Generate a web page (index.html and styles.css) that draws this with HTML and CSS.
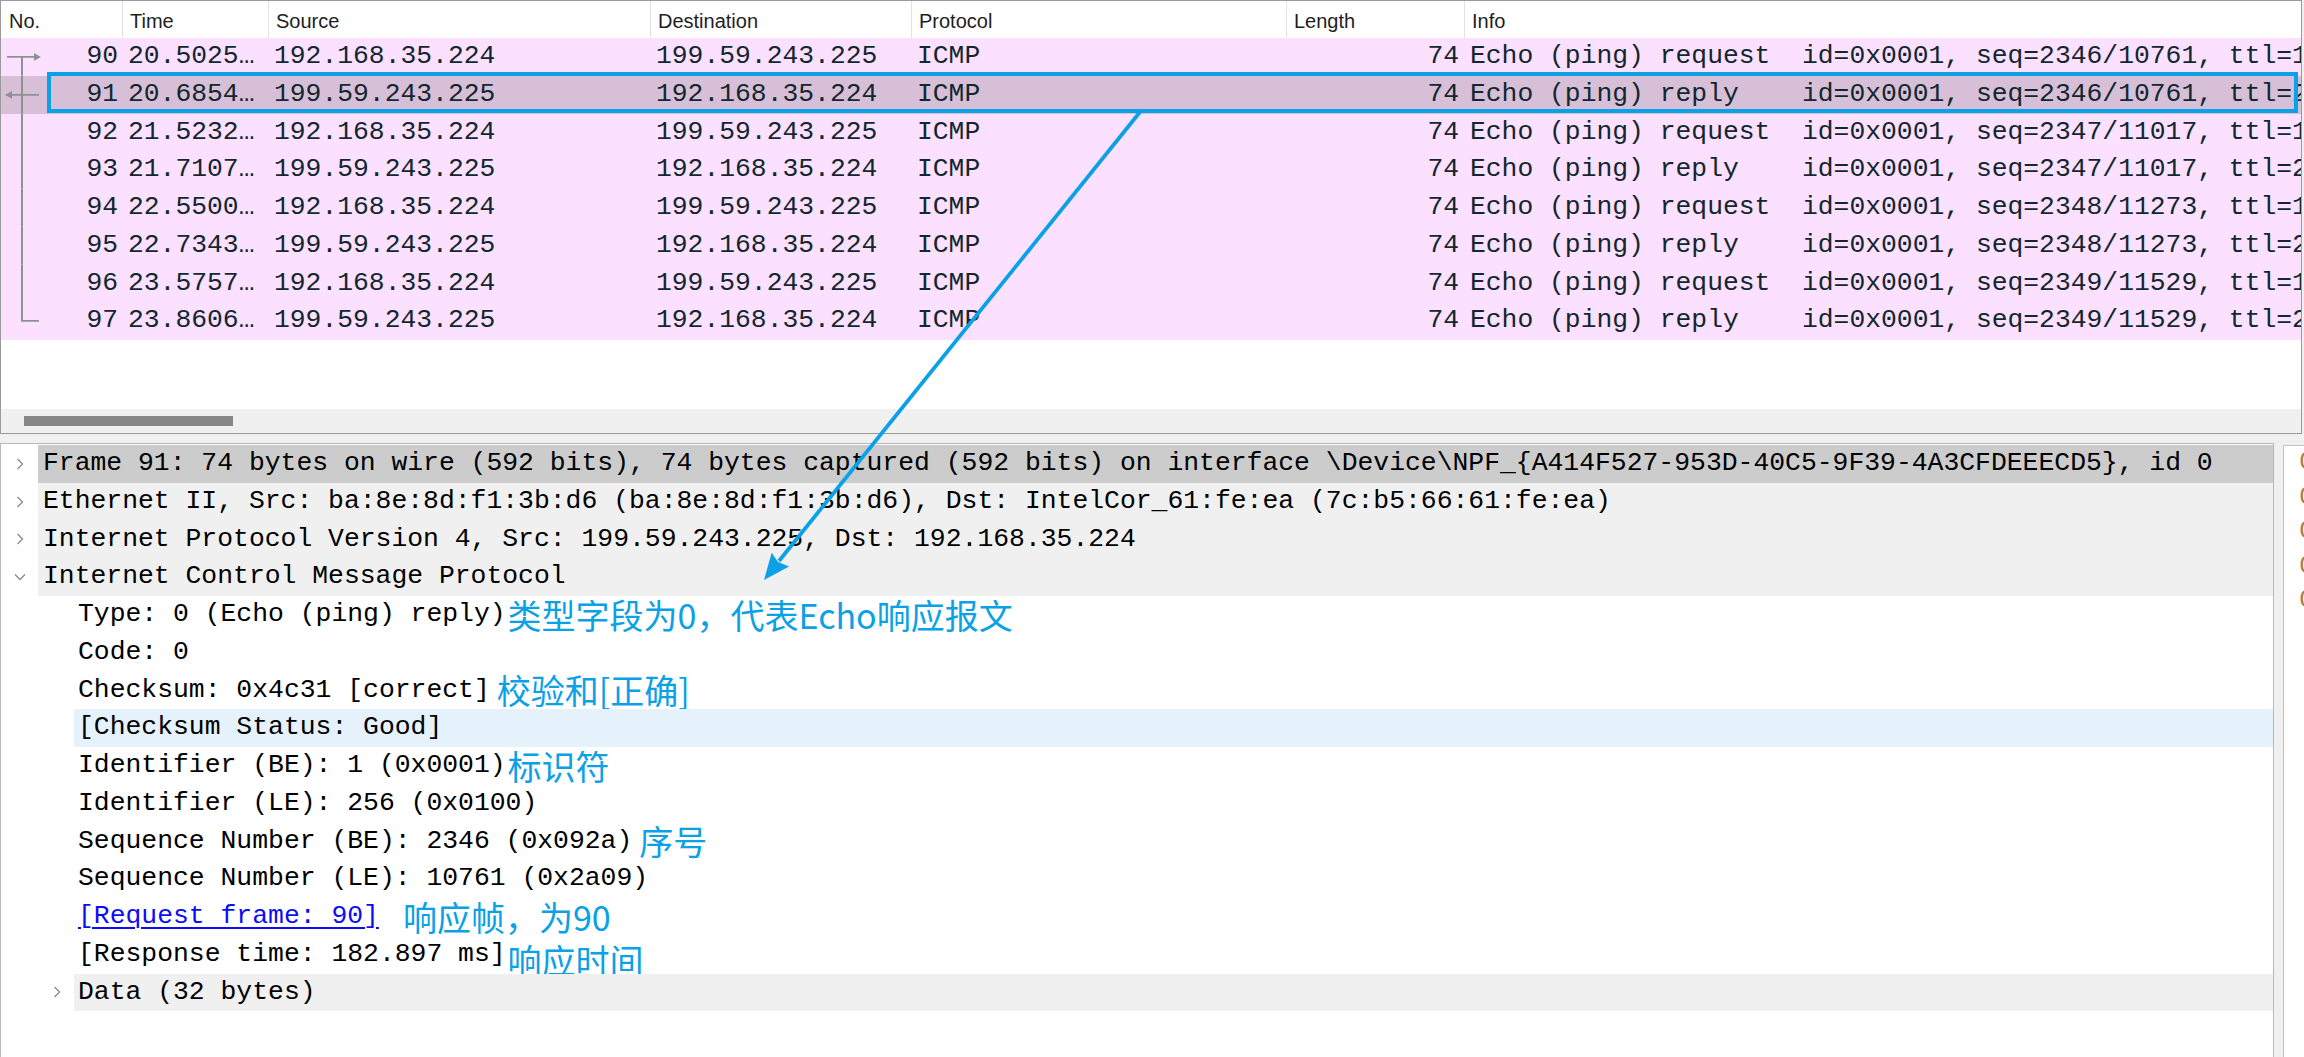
FILE: index.html
```html
<!DOCTYPE html>
<html lang="zh">
<head>
<meta charset="utf-8">
<title>Wireshark · ICMP Echo reply</title>
<link rel="stylesheet" href="styles.css">
</head>
<body>
<div class="app">
  <section class="plist">
    <div class="plist-head cols">
      <div class="hc">No.</div>
      <div class="hc">Time</div>
      <div class="hc">Source</div>
      <div class="hc">Destination</div>
      <div class="hc">Protocol</div>
      <div class="hc">Length</div>
      <div class="hc">Info</div>
    </div>
    <div class="plist-body">
      <div class="prow cols">
        <div class="no"><svg viewBox="0 0 40 38" preserveAspectRatio="none"><path class="rl" d="M6 19H34M21 19V38"/><polygon class="rh" points="33,15 40,19 33,23"/></svg><span>90</span></div>
        <div>20.5025…</div><div>192.168.35.224</div><div>199.59.243.225</div><div>ICMP</div><div class="len">74</div><div>Echo (ping) request  id=0x0001, seq=2346/10761, ttl=128 (reply in 91)</div>
      </div>
      <div class="prow cols cur">
        <div class="no"><svg viewBox="0 0 40 38" preserveAspectRatio="none"><path class="rl" d="M11 19H38M21 0V38"/><polygon class="rh" points="11,15 4,19 11,23"/></svg><span>91</span></div>
        <div>20.6854…</div><div>199.59.243.225</div><div>192.168.35.224</div><div>ICMP</div><div class="len">74</div><div>Echo (ping) reply    id=0x0001, seq=2346/10761, ttl=241 (request in 90)</div>
      </div>
      <div class="prow cols">
        <div class="no"><svg viewBox="0 0 40 38" preserveAspectRatio="none"><path class="rl" d="M21 0V38"/></svg><span>92</span></div>
        <div>21.5232…</div><div>192.168.35.224</div><div>199.59.243.225</div><div>ICMP</div><div class="len">74</div><div>Echo (ping) request  id=0x0001, seq=2347/11017, ttl=128 (reply in 93)</div>
      </div>
      <div class="prow cols">
        <div class="no"><svg viewBox="0 0 40 38" preserveAspectRatio="none"><path class="rl" d="M21 0V38"/></svg><span>93</span></div>
        <div>21.7107…</div><div>199.59.243.225</div><div>192.168.35.224</div><div>ICMP</div><div class="len">74</div><div>Echo (ping) reply    id=0x0001, seq=2347/11017, ttl=241 (request in 92)</div>
      </div>
      <div class="prow cols">
        <div class="no"><svg viewBox="0 0 40 38" preserveAspectRatio="none"><path class="rl" d="M21 0V38"/></svg><span>94</span></div>
        <div>22.5500…</div><div>192.168.35.224</div><div>199.59.243.225</div><div>ICMP</div><div class="len">74</div><div>Echo (ping) request  id=0x0001, seq=2348/11273, ttl=128 (reply in 95)</div>
      </div>
      <div class="prow cols">
        <div class="no"><svg viewBox="0 0 40 38" preserveAspectRatio="none"><path class="rl" d="M21 0V38"/></svg><span>95</span></div>
        <div>22.7343…</div><div>199.59.243.225</div><div>192.168.35.224</div><div>ICMP</div><div class="len">74</div><div>Echo (ping) reply    id=0x0001, seq=2348/11273, ttl=241 (request in 94)</div>
      </div>
      <div class="prow cols">
        <div class="no"><svg viewBox="0 0 40 38" preserveAspectRatio="none"><path class="rl" d="M21 0V38"/></svg><span>96</span></div>
        <div>23.5757…</div><div>192.168.35.224</div><div>199.59.243.225</div><div>ICMP</div><div class="len">74</div><div>Echo (ping) request  id=0x0001, seq=2349/11529, ttl=128 (reply in 97)</div>
      </div>
      <div class="prow cols">
        <div class="no"><svg viewBox="0 0 40 38" preserveAspectRatio="none"><path class="rl" d="M21 0V19H38"/></svg><span>97</span></div>
        <div>23.8606…</div><div>199.59.243.225</div><div>192.168.35.224</div><div>ICMP</div><div class="len">74</div><div>Echo (ping) reply    id=0x0001, seq=2349/11529, ttl=241 (request in 96)</div>
      </div>
    </div>
    <div class="plist-fill"></div>
    <div class="hscroll"><div class="thumb"></div></div>
  </section>

  <div class="lower">
    <section class="tree">
      <div class="node l0 sel"><span class="tw"><svg class="chev" viewBox="0 0 8 12"><polyline points="1.5,1 6.5,6 1.5,11"/></svg></span><span class="lbl">Frame 91: 74 bytes on wire (592 bits), 74 bytes captured (592 bits) on interface \Device\NPF_{A414F527-953D-40C5-9F39-4A3CFDEEECD5}, id 0</span></div>
      <div class="node l0 grp"><span class="tw"><svg class="chev" viewBox="0 0 8 12"><polyline points="1.5,1 6.5,6 1.5,11"/></svg></span><span class="lbl">Ethernet II, Src: ba:8e:8d:f1:3b:d6 (ba:8e:8d:f1:3b:d6), Dst: IntelCor_61:fe:ea (7c:b5:66:61:fe:ea)</span></div>
      <div class="node l0 grp"><span class="tw"><svg class="chev" viewBox="0 0 8 12"><polyline points="1.5,1 6.5,6 1.5,11"/></svg></span><span class="lbl">Internet Protocol Version 4, Src: 199.59.243.225, Dst: 192.168.35.224</span></div>
      <div class="node l0 grp"><span class="tw"><svg class="chev-d" viewBox="0 0 12 8"><polyline points="1,1.5 6,6.5 11,1.5"/></svg></span><span class="lbl">Internet Control Message Protocol</span></div>
      <div class="node l1"><span class="tw"></span><span class="lbl">Type: 0 (Echo (ping) reply)<span class="note">类型字段为0，代表Echo响应报文</span></span></div>
      <div class="node l1"><span class="tw"></span><span class="lbl">Code: 0</span></div>
      <div class="node l1"><span class="tw"></span><span class="lbl">Checksum: 0x4c31 [correct]<span class="note gap-m">校验和[正确]</span></span></div>
      <div class="node l1 hl"><span class="tw"></span><span class="lbl">[Checksum Status: Good]</span></div>
      <div class="node l1"><span class="tw"></span><span class="lbl">Identifier (BE): 1 (0x0001)<span class="note">标识符</span></span></div>
      <div class="node l1"><span class="tw"></span><span class="lbl">Identifier (LE): 256 (0x0100)</span></div>
      <div class="node l1"><span class="tw"></span><span class="lbl">Sequence Number (BE): 2346 (0x092a)<span class="note gap-m">序号</span></span></div>
      <div class="node l1"><span class="tw"></span><span class="lbl">Sequence Number (LE): 10761 (0x2a09)</span></div>
      <div class="node l1"><span class="tw"></span><span class="lbl"><a class="link" href="#f90">[Request frame: 90]</a><span class="note gap-l">响应帧，为90</span></span></div>
      <div class="node l1"><span class="tw"></span><span class="lbl">[Response time: 182.897 ms]<span class="note low">响应时间</span></span></div>
      <div class="node l1 grp"><span class="tw"><svg class="chev" viewBox="0 0 8 12"><polyline points="1.5,1 6.5,6 1.5,11"/></svg></span><span class="lbl">Data (32 bytes)</span></div>
    </section>
    <section class="bytes">
      <div class="hexline">0000</div>
      <div class="hexline">0010</div>
      <div class="hexline">0020</div>
      <div class="hexline">0030</div>
      <div class="hexline">0040</div>
    </section>
  </div>

  <svg class="overlay" viewBox="0 0 2304 1057">
    <rect x="49" y="74" width="2247" height="37" fill="none" stroke="#0aa1e6" stroke-width="4"/>
    <line x1="1140" y1="112" x2="779" y2="561" stroke="#0aa1e6" stroke-width="3.8"/>
    <polygon points="764,580 789,566.6 778,562 771.7,552.8" fill="#0aa1e6"/>
  </svg>
</div>
</body>
</html>
```

FILE: styles.css
```css
* {
  box-sizing: border-box;
  margin: 0;
  padding: 0;
}

html, body {
  width: 2304px;
  height: 1057px;
  overflow: hidden;
}

body {
  background: #f0f0f0;
  font-family: "Liberation Mono", "DejaVu Sans Mono", monospace;
  color: #000;
}

.app {
  position: relative;
  width: 2304px;
  height: 1057px;
}

/* ---------- packet list ---------- */
.plist {
  width: 2302px;
  height: 434px;
  border: 1px solid #9a9a9a;
  background: #fff;
  display: flex;
  flex-direction: column;
  overflow: hidden;
}

.cols {
  display: grid;
  grid-template-columns: 121px 146px 382px 261px 375px 178px 1fr;
}

.plist-head {
  height: 37px;
  flex: none;
  font-family: "Liberation Sans", Arial, sans-serif;
  font-size: 20px;
  color: #1e1e1e;
}

.hc {
  display: flex;
  align-items: center;
  padding: 3px 0 0 7px;
  border-left: 1px solid #e3e3e3;
  white-space: nowrap;
}

.hc:first-child {
  border-left: 0;
  padding-left: 8px;
}

.plist-body {
  flex: none;
}

.prow {
  height: 37.75px;
  background: #fce0ff;
  color: #12272e;
  font-size: 26.35px;
  line-height: 37px;
  white-space: pre;
}

.prow.cur {
  background: #d8bfd8;
}

.prow > div {
  padding-left: 6px;
  overflow: hidden;
}

.prow > .no {
  display: flex;
  padding: 0 4px 0 0;
}

.no svg {
  flex: none;
  width: 40px;
  height: 100%;
}

.no span {
  margin-left: auto;
}

.rl {
  fill: none;
  stroke: #8d9193;
  stroke-width: 2;
}

.rh {
  fill: #8d9193;
}

.prow > .len {
  text-align: right;
  padding: 0 5px 0 0;
}

.plist-fill {
  flex: 1;
}

.hscroll {
  height: 24px;
  flex: none;
  background: #f0f0f0;
  padding: 7px 0 0 23px;
}

.thumb {
  width: 209px;
  height: 10px;
  background: #878787;
}

/* ---------- details ---------- */
.lower {
  display: flex;
  margin-top: 9px;
  height: 614px;
}

.tree {
  flex: none;
  width: 2274px;
  border: 1px solid #b7b7c2;
  border-bottom: 0;
  background: #fff;
  padding-top: 1px;
  font-size: 26.4px;
  overflow: hidden;
}

.node {
  display: flex;
  height: 37.75px;
  line-height: 37.75px;
  white-space: pre;
}

.tw {
  flex: none;
  width: 37px;
  display: flex;
  align-items: center;
  justify-content: center;
}

.l1 .tw {
  width: 73px;
  padding-left: 39px;
}

.chev {
  width: 8px;
  height: 12px;
}

.chev-d {
  width: 12px;
  height: 8px;
}

.chev polyline,
.chev-d polyline {
  fill: none;
  stroke: #8a8a8a;
  stroke-width: 1.3;
}

.lbl {
  flex: 1;
  display: flex;
  align-items: center;
  padding-left: 5px;
}

.l1 .lbl {
  padding-left: 4px;
}

.sel .lbl {
  background: #cccccc;
}

.grp .lbl {
  background: #f0f0f0;
}

.hl .lbl {
  background: #e5f1fb;
}

.link {
  color: #0c0cf5;
  text-decoration: underline;
  text-decoration-thickness: 2px;
  text-underline-offset: 4px;
}

.note {
  font-family: "Noto Sans CJK SC", "Noto Sans", sans-serif;
  font-size: 34px;
  line-height: 1;
  color: #0aa1e6;
  margin-left: 2px;
}

.note.gap-m {
  margin-left: 7px;
}

.note.gap-l {
  margin-left: 24px;
}

.note.low {
  margin-top: 11px;
}

.bytes {
  flex: none;
  width: 21px;
  min-width: 0;
  margin: 2px 0 0 9px;
  border: 1px solid #c4c4c4;
  border-right: 0;
  border-bottom: 0;
  background: #fff;
  overflow: hidden;
  color: #a97b4f;
  font-size: 26.4px;
  padding: 0 0 0 15px;
}

.hexline {
  height: 34.6px;
  line-height: 34.6px;
  white-space: nowrap;
  margin-top: -1px;
}

.hexline + .hexline {
  margin-top: 0;
}

/* ---------- annotation overlay ---------- */
.overlay {
  position: absolute;
  top: 0;
  left: 0;
  width: 2304px;
  height: 1057px;
  pointer-events: none;
}
```
